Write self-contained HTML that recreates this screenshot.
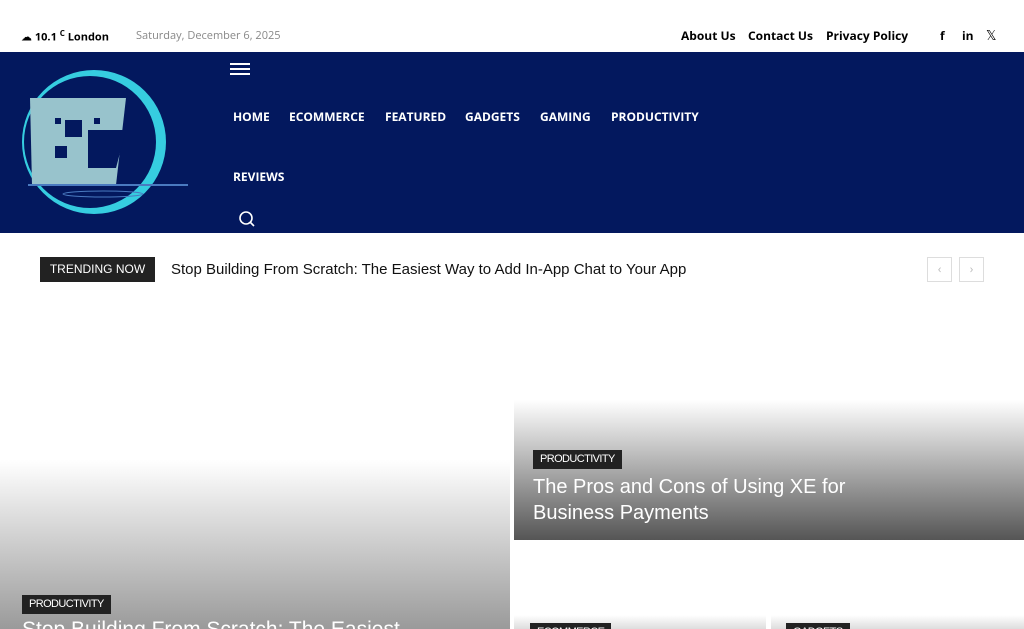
<!DOCTYPE html>
<html style="width:1024px;height:629px;overflow:hidden"><head><meta charset="utf-8"><style>
*{margin:0;padding:0;box-sizing:border-box}
body{width:1024px;height:629px;overflow:hidden;background:#fff;font-family:"Open Sans","DejaVu Sans","Liberation Sans",sans-serif;position:relative}
.a{position:absolute}
.top{font-size:11px;color:#000;font-weight:bold}
.nav{left:0;top:52px;width:1024px;height:181px;background:#03185e}
.ni{color:#fff;font-weight:bold;font-size:12px;top:108px}
.tag{background:#222;color:#fff;font-family:"Liberation Sans",sans-serif;font-size:11px;padding:0 7px;height:19px;line-height:19px;letter-spacing:-0.6px}
.t{color:#fff;font-family:"Liberation Sans",sans-serif;font-size:20px;line-height:26px}
</style></head><body>
<div class="a top" style="left:21px;top:28px">☁ 10.1 <sup style="font-size:8px">C</sup> London</div>
<div class="a" style="left:136px;top:28px;font-size:11px;color:#888">Saturday, December 6, 2025</div>
<div class="a top" style="left:681px;top:27px;font-size:12px">About Us</div>
<div class="a top" style="left:748px;top:27px;font-size:12px">Contact Us</div>
<div class="a top" style="left:826px;top:27px;font-size:12px">Privacy Policy</div>
<div class="a top" style="left:940px;top:27px;font-size:12px">f</div>
<div class="a top" style="left:962px;top:27px;font-size:12px">in</div>
<div class="a" style="left:986px;top:26px;font-size:13px">𝕏</div>
<div class="a nav">
<svg class="a" style="left:18px;top:16px" width="170" height="148" viewBox="0 0 170 148">
<circle cx="76" cy="74" r="72" fill="#36cde0"/>
<circle cx="72" cy="74" r="66" fill="#03185e"/>
<path d="M76 2 A72 72 0 0 0 76 146 A66 66 0 0 1 76 2Z" fill="#3b7fc0"/>
<polygon points="12,30 108,30 98,117 14,117" fill="#98c3cc"/>
<polygon points="70,62 108,62 98,100 70,100" fill="#03185e"/>
<rect x="47" y="52" width="17" height="17" fill="#03185e"/>
<rect x="37" y="78" width="12" height="12" fill="#03185e"/>
<rect x="37" y="50" width="6" height="6" fill="#03185e"/>
<rect x="76" y="50" width="6" height="6" fill="#03185e"/>
<line x1="10" y1="117" x2="170" y2="117" stroke="#4a7ac0" stroke-width="2"/>
<ellipse cx="85" cy="126" rx="40" ry="3" fill="none" stroke="#4a7ac0"/>
</svg>
<div class="a" style="left:230px;top:11px;width:20px;height:2px;background:#fff;box-shadow:0 5px #fff,0 10px #fff"></div>
<svg class="a" style="left:238px;top:158px" width="18" height="18"><circle cx="8" cy="8" r="6" fill="none" stroke="#fff" stroke-width="1.6"/><line x1="12.5" y1="12.5" x2="16" y2="16" stroke="#fff" stroke-width="1.6"/></svg>
</div>
<div class="a ni" style="left:233px">HOME</div>
<div class="a ni" style="left:289px">ECOMMERCE</div>
<div class="a ni" style="left:385px">FEATURED</div>
<div class="a ni" style="left:465px">GADGETS</div>
<div class="a ni" style="left:540px">GAMING</div>
<div class="a ni" style="left:611px">PRODUCTIVITY</div>
<div class="a ni" style="left:233px;top:168px">REVIEWS</div>
<div class="a" style="left:40px;top:257px;width:115px;height:25px;background:#222;color:#fff;font-family:'Liberation Sans',sans-serif;font-size:12px;line-height:25px;text-align:center">TRENDING NOW</div>
<div class="a" style="left:171px;top:261px;font-family:'Liberation Sans',sans-serif;font-size:15px;color:#111">Stop Building From Scratch: The Easiest Way to Add In-App Chat to Your App</div>
<div class="a" style="left:927px;top:257px;width:25px;height:25px;border:1px solid #ddd;color:#bbb;text-align:center;line-height:22px;font-size:12px">‹</div>
<div class="a" style="left:959px;top:257px;width:25px;height:25px;border:1px solid #ddd;color:#bbb;text-align:center;line-height:22px;font-size:12px">›</div>
<div class="a" style="left:0;top:460px;width:510px;height:169px;background:linear-gradient(#fff,#9a9a9a)"></div>
<div class="a tag" style="left:22px;top:595px">PRODUCTIVITY</div>
<div class="a t" style="left:22px;top:617px;font-size:21px">Stop Building From Scratch: The Easiest</div>
<div class="a" style="left:514px;top:400px;width:510px;height:140px;background:linear-gradient(#fff,#555)"></div>
<div class="a tag" style="left:533px;top:450px">PRODUCTIVITY</div>
<div class="a t" style="left:533px;top:474px">The Pros and Cons of Using XE for<br>Business Payments</div>
<div class="a" style="left:514px;top:615px;width:252px;height:14px;background:linear-gradient(#fff,#ddd)"></div>
<div class="a" style="left:771px;top:615px;width:253px;height:14px;background:linear-gradient(#fff,#ddd)"></div>
<div class="a tag" style="left:530px;top:623px">ECOMMERCE</div>
<div class="a tag" style="left:786px;top:623px">GADGETS</div>
</body></html>
